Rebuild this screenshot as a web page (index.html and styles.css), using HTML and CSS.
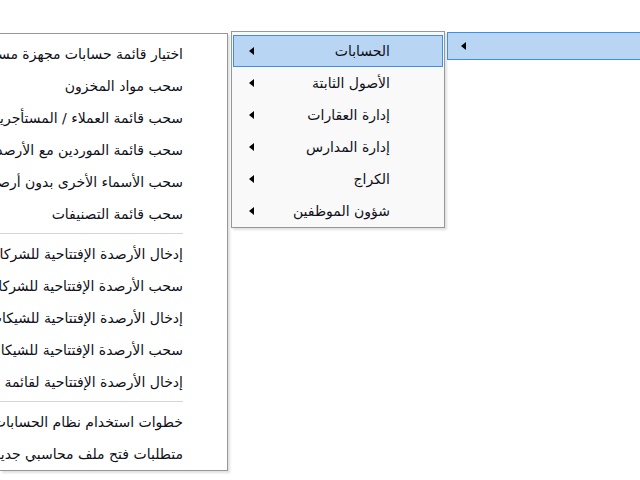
FILE: index.html
```html
<!DOCTYPE html>
<html lang="ar">
<head>
    <meta charset="UTF-8">
    <title>القوائم</title>
    <link rel="stylesheet" href="styles.css">
</head>
<body>
    <div class="desk">
        <div class="menu menu-main">
            <div class="item">اختيار قائمة حسابات مجهزة مسبقاً</div>
            <div class="item">سحب مواد المخزون</div>
            <div class="item">سحب قائمة العملاء / المستأجرين</div>
            <div class="item">سحب قائمة الموردين مع الأرصدة</div>
            <div class="item">سحب الأسماء الأخرى بدون أرصدة</div>
            <div class="item">سحب قائمة التصنيفات</div>
            <div class="sep"></div>
            <div class="item">إدخال الأرصدة الإفتتاحية للشركات</div>
            <div class="item">سحب الأرصدة الإفتتاحية للشركات</div>
            <div class="item">إدخال الأرصدة الإفتتاحية للشيكات</div>
            <div class="item">سحب الأرصدة الإفتتاحية للشيكات</div>
            <div class="item">إدخال الأرصدة الإفتتاحية لقائمة المخزون</div>
            <div class="sep"></div>
            <div class="item">خطوات استخدام نظام الحسابات</div>
            <div class="item">متطلبات فتح ملف محاسبي جديد</div>
        </div>
        <div class="menu menu-sub">
            <div class="item active"><span>الحسابات</span><i class="arrow"></i></div>
            <div class="item"><span>الأصول الثابتة</span><i class="arrow"></i></div>
            <div class="item"><span>إدارة العقارات</span><i class="arrow"></i></div>
            <div class="item"><span>إدارة المدارس</span><i class="arrow"></i></div>
            <div class="item"><span>الكراج</span><i class="arrow"></i></div>
            <div class="item"><span>شؤون الموظفين</span><i class="arrow"></i></div>
        </div>
        <div class="bar">
            <div class="bar-item"><i class="arrow"></i></div>
        </div>
    </div>
</body>
</html>
```

FILE: styles.css
```css
html, body {
    margin: 0;
    padding: 0;
    background: #fff;
}
body {
    font-family: Tahoma, "DejaVu Sans", sans-serif;
    font-size: 14px;
    color: #101018;
    overflow: hidden;
}
.desk {
    display: flex;
    align-items: flex-start;
    padding-top: 31px;
    width: 640px;
    height: 449px;
}
.menu {
    direction: rtl;
    background: #fff;
    border: 1px solid #979797;
    box-shadow: 2px 2px 2px rgba(0, 0, 0, 0.12);
}
.menu-main {
    width: 227px;
    flex: none;
    margin-top: 2px;
    border-left: none;
    padding-top: 4px;
    overflow: hidden;
}
.menu-main .item {
    height: 32px;
    line-height: 32px;
    padding-right: 44px;
    white-space: nowrap;
}
.menu-main .sep {
    height: 1px;
    background: #d4d4d4;
    margin: 3px 44px 4px 0;
}
.menu-sub {
    width: 210px;
    flex: none;
    margin-left: 3px;
    padding: 3px 1px 0;
    background: #f9f9f9;
}
.menu-sub .item {
    display: flex;
    justify-content: space-between;
    align-items: center;
    height: 30px;
    padding: 0 52px 0 15px;
    border: 1px solid transparent;
    white-space: nowrap;
}
.menu-sub .item.active {
    background: #b8d6f4;
    border-color: #3c8fe2;
}
.arrow {
    display: block;
    width: 0;
    height: 0;
    border-top: 4px solid transparent;
    border-bottom: 4px solid transparent;
    border-right: 5px solid #000;
}
.bar {
    flex: 1;
    margin-left: 2px;
    margin-top: 1px;
}
.bar-item {
    height: 26px;
    display: flex;
    align-items: center;
    padding-left: 13px;
    background: #b8d6f4;
    border: 1px solid #3c8fe2;
    border-right: none;
}
```
